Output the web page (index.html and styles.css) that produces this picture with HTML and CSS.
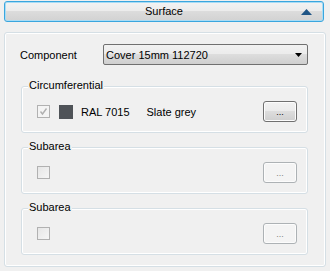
FILE: index.html
```html
<!DOCTYPE html>
<html>
<head>
<meta charset="utf-8">
<link rel="stylesheet" href="styles.css">
</head>
<body>
<div class="header">
  <span class="header-title">Surface</span>
  <svg class="header-arrow" width="11" height="6" viewBox="0 0 11 6"><polygon points="0,6 11,6 5.5,0" fill="#1f5586"/></svg>
</div>
<div class="panel">
  <div class="comp-row">
    <span class="comp-label">Component</span>
    <div class="combo">
      <span class="combo-text">Cover 15mm 112720</span>
      <svg class="combo-arrow" width="7" height="4" viewBox="0 0 7 4"><polygon points="0,0 7,0 3.5,4" fill="#000"/></svg>
    </div>
  </div>
  <div class="group group-first">
    <span class="legend">Circumferential</span>
    <div class="group-row">
      <span class="check checked">
        <svg width="11" height="11" viewBox="0 0 11 11"><path d="M2.5 5.5 L4.5 8 L8.5 2.5" fill="none" stroke="#b0b0b0" stroke-width="1.4"/></svg>
      </span>
      <span class="swatch"></span>
      <span class="ral">RAL 7015</span>
      <span class="cname">Slate grey</span>
      <span class="btn">...</span>
    </div>
  </div>
  <div class="group">
    <span class="legend">Subarea</span>
    <div class="group-row">
      <span class="check"></span>
      <span class="btn disabled">...</span>
    </div>
  </div>
  <div class="group">
    <span class="legend">Subarea</span>
    <div class="group-row">
      <span class="check"></span>
      <span class="btn disabled">...</span>
    </div>
  </div>
</div>
</body>
</html>
```

FILE: styles.css
```css
html, body {
  margin: 0;
  padding: 0;
  background: #f0f0f0;
  width: 330px;
  height: 271px;
  overflow: hidden;
  font-family: "Liberation Sans", Arial, sans-serif;
  font-size: 11px;
  color: #000;
}

.header {
  position: relative;
  box-sizing: border-box;
  margin: 1px 0 0 4px;
  width: 320px;
  height: 21px;
  border: 1px solid #3aa6de;
  border-radius: 3px;
  box-shadow: inset 0 0 0 1px #a9dcf5;
  background: linear-gradient(#f3f3f3 0%, #ececec 45%, #dcdcdc 50%, #d2d2d2 100%);
  display: flex;
  align-items: center;
  justify-content: center;
}

.header-title {
  line-height: 13px;
}

.header-arrow {
  position: absolute;
  right: 11px;
  top: 7px;
}

.panel {
  box-sizing: border-box;
  margin: 10px 0 0 4px;
  width: 322px;
  height: 235px;
  border: 1px solid #d5dfe5;
  border-radius: 3px;
  box-shadow: inset 0 0 0 1px #fff;
  padding: 11px 0 0 15px;
}

.comp-row {
  display: flex;
  align-items: center;
  height: 21px;
}

.comp-label {
  width: 83px;
}

.combo {
  box-sizing: border-box;
  width: 205px;
  height: 21px;
  border: 1px solid #707070;
  border-radius: 2px;
  background: linear-gradient(#f2f2f2 0%, #ebebeb 50%, #dddddd 50%, #cfcfcf 100%);
  display: flex;
  align-items: center;
  padding: 0 5px 0 2px;
}

.combo-text {
  flex: 1;
}

.group {
  position: relative;
  box-sizing: border-box;
  margin: 14px 0 0 1px;
  width: 287px;
  height: 47px;
  border: 1px solid #d5dfe5;
  border-radius: 3px;
  box-shadow: inset 0 0 0 1px #fff;
  padding: 14px 10px 0 15px;
}

.group-first {
  margin-top: 21px;
}

.legend {
  position: absolute;
  top: -8px;
  left: 6px;
  padding: 0 1px;
  background: #f0f0f0;
  line-height: 13px;
}

.group-row {
  display: flex;
  align-items: center;
  height: 21px;
}

.check {
  box-sizing: border-box;
  width: 13px;
  height: 13px;
  border: 1px solid #b1b1b1;
  background: linear-gradient(135deg, #e6e6e6, #f6f6f6);
  display: flex;
  align-items: center;
  justify-content: center;
}

.check.checked {
  background: #f4f4f4;
}

.swatch {
  width: 14px;
  height: 14px;
  margin-left: 9px;
  background: #4f5358;
}

.ral {
  margin-left: 8px;
}

.cname {
  margin-left: 17px;
}

.btn {
  box-sizing: border-box;
  margin-left: auto;
  width: 34px;
  height: 21px;
  border: 1px solid #707070;
  border-radius: 3px;
  background: linear-gradient(#f2f2f2 0%, #ebebeb 50%, #dddddd 50%, #cfcfcf 100%);
  box-shadow: inset 0 0 0 1px #fcfcfc;
  display: flex;
  align-items: center;
  justify-content: center;
  font-size: 9px;
  line-height: 9px;
  padding-top: 2px;
}

.btn.disabled {
  border-color: #adb2b5;
  background: #f4f4f4;
  color: #838383;
}
```
